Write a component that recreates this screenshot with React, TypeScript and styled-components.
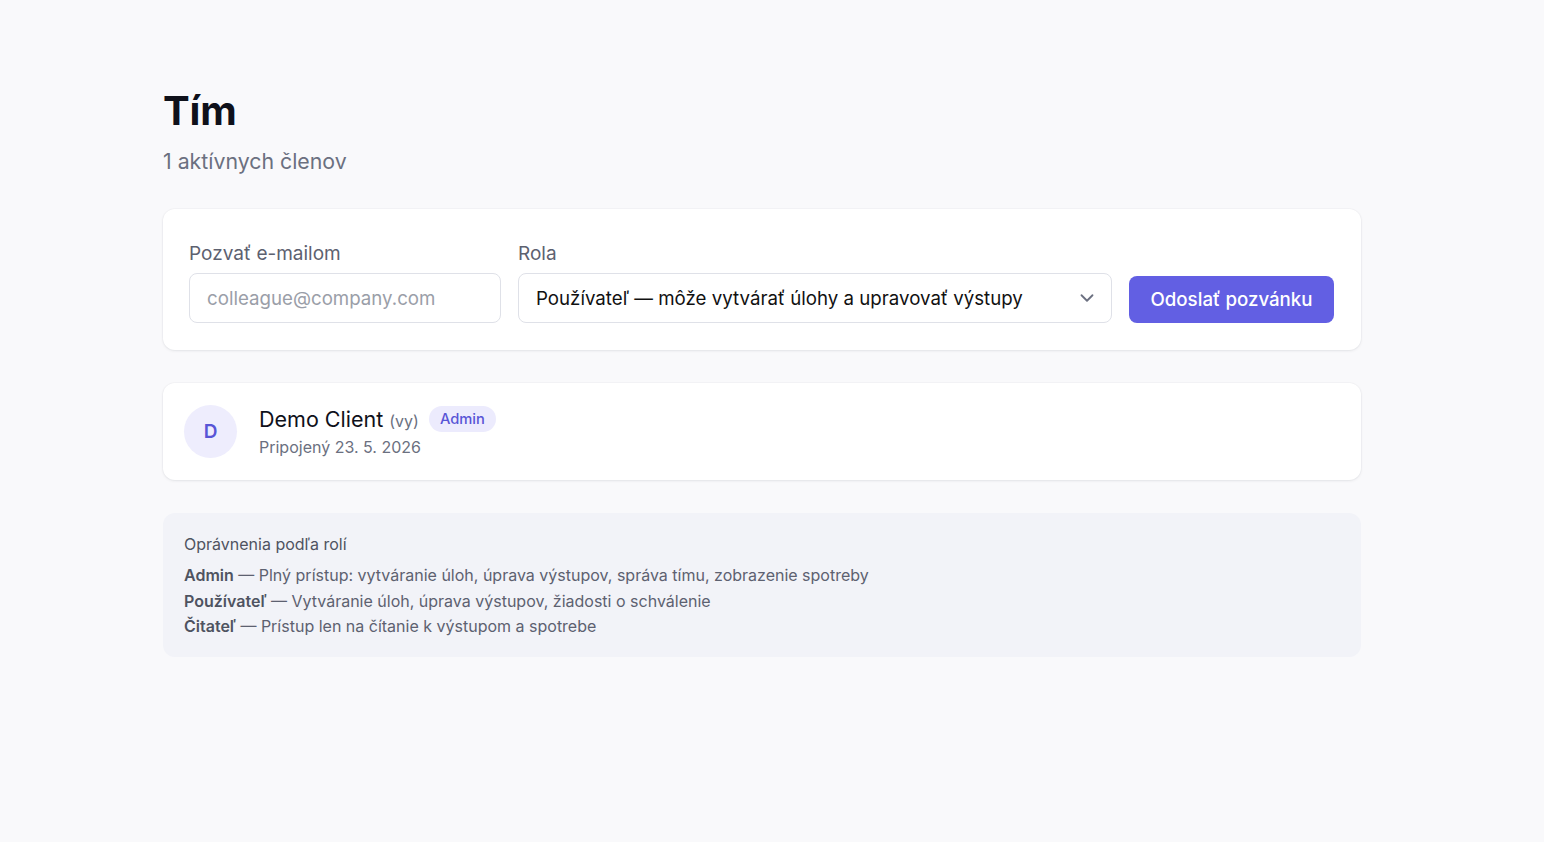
import React, { useState } from "react";
import styled, { createGlobalStyle } from "styled-components";

const GlobalStyle = createGlobalStyle`
    html, body {
        margin: 0;
        padding: 0;
        background: #f9f9fb;
        font-family: Inter, "Noto Sans", "Liberation Sans", sans-serif;
        color: #111827;
    }

    * {
        box-sizing: border-box;
    }
`;

const roles = [
    { value: "admin", label: "Admin — plný prístup k tímu a spotrebe" },
    { value: "user", label: "Používateľ — môže vytvárať úlohy a upravovať výstupy" },
    { value: "reader", label: "Čitateľ — prístup len na čítanie" },
];

const permissions = [
    { role: "Admin", text: "Plný prístup: vytváranie úloh, úprava výstupov, správa tímu, zobrazenie spotreby" },
    { role: "Používateľ", text: "Vytváranie úloh, úprava výstupov, žiadosti o schválenie" },
    { role: "Čitateľ", text: "Prístup len na čítanie k výstupom a spotrebe" },
];

const ChevronDown = () => (
    <svg width="22" height="22" viewBox="0 0 24 24" fill="none" stroke="#6b7080" strokeWidth="2" strokeLinecap="round" strokeLinejoin="round">
        <path d="m6 9 6 6 6-6" />
    </svg>
);

const App = () => {
    const [email, setEmail] = useState("");
    const [role, setRole] = useState("user");

    return (
        <>
            <GlobalStyle />
            <Page>
                <Header>
                    <Title>Tím</Title>
                    <Subtitle>1 aktívnych členov</Subtitle>
                </Header>

                <InviteCard>
                    <Field width="312px">
                        <Label>Pozvať e-mailom</Label>
                        <Input
                            type="email"
                            placeholder="colleague@company.com"
                            value={email}
                            onChange={(e) => setEmail(e.target.value)}
                        />
                    </Field>
                    <Field grow>
                        <Label>Rola</Label>
                        <SelectWrap>
                            <Select value={role} onChange={(e) => setRole(e.target.value)}>
                                {roles.map((r) => (
                                    <option key={r.value} value={r.value}>
                                        {r.label}
                                    </option>
                                ))}
                            </Select>
                            <SelectIcon>
                                <ChevronDown />
                            </SelectIcon>
                        </SelectWrap>
                    </Field>
                    <SendButton type="button">Odoslať pozvánku</SendButton>
                </InviteCard>

                <MemberCard>
                    <Avatar>D</Avatar>
                    <MemberInfo>
                        <NameRow>
                            <Name>Demo Client</Name>
                            <You>(vy)</You>
                            <Badge>Admin</Badge>
                        </NameRow>
                        <Joined>Pripojený 23. 5. 2026</Joined>
                    </MemberInfo>
                </MemberCard>

                <PermissionsBox>
                    <PermissionsTitle>Oprávnenia podľa rolí</PermissionsTitle>
                    <PermissionList>
                        {permissions.map((p) => (
                            <PermissionRow key={p.role}>
                                <strong>{p.role}</strong> — {p.text}
                            </PermissionRow>
                        ))}
                    </PermissionList>
                </PermissionsBox>
            </Page>
        </>
    );
};

export default App;

const Page = styled.main`
    display: flex;
    flex-direction: column;
    width: 1198px;
    margin-left: 163px;
    padding: 87px 0 80px;
`;

const Header = styled.header`
    display: flex;
    flex-direction: column;
    gap: 11px;
    margin-bottom: 33px;
`;

const Title = styled.h1`
    margin: 0;
    font-size: 40px;
    line-height: 48px;
    font-weight: 700;
    color: #0f111a;
    letter-spacing: -0.2px;
`;

const Subtitle = styled.p`
    margin: 0;
    font-size: 21.3px;
    line-height: 30px;
    color: #6b7080;
`;

const Card = styled.section`
    background: #ffffff;
    border-radius: 12px;
    box-shadow: 0 1px 3px rgba(17, 24, 39, 0.08), 0 0 0 1px rgba(17, 24, 39, 0.02);
`;

const InviteCard = styled(Card)`
    display: flex;
    align-items: flex-end;
    gap: 17px;
    padding: 31px 27px 27px 26px;
    margin-bottom: 33px;
`;

const Field = styled.div<{ width?: string; grow?: boolean }>`
    display: flex;
    flex-direction: column;
    gap: 6px;
    width: ${(p) => p.width || "auto"};
    flex: ${(p) => (p.grow ? "1" : "none")};
`;

const Label = styled.label`
    font-size: 19px;
    line-height: 27px;
    color: #5d6170;
`;

const Input = styled.input`
    height: 50px;
    width: 100%;
    padding: 0 17px;
    border: 1px solid #dfe1e8;
    border-radius: 8px;
    background: #fff;
    font-family: inherit;
    font-size: 18.7px;
    color: #111827;
    outline: none;

    &::placeholder {
        color: #9a9ea8;
    }
`;

const SelectWrap = styled.div`
    position: relative;
`;

const Select = styled.select`
    appearance: none;
    height: 50px;
    width: 100%;
    padding: 0 44px 0 17px;
    border: 1px solid #dfe1e8;
    border-radius: 8px;
    background: #fff;
    font-family: inherit;
    font-size: 18.7px;
    color: #111111;
    outline: none;
`;

const SelectIcon = styled.span`
    position: absolute;
    right: 14px;
    top: 50%;
    transform: translateY(-50%);
    display: flex;
    pointer-events: none;
`;

const SendButton = styled.button`
    height: 47px;
    width: 205px;
    border: none;
    border-radius: 8px;
    background: #625fe3;
    color: #ffffff;
    font-family: inherit;
    font-size: 18.7px;
    font-weight: 500;
    cursor: pointer;
`;

const MemberCard = styled(Card)`
    display: flex;
    align-items: center;
    gap: 22px;
    padding: 22px 21px;
    margin-bottom: 33px;
`;

const Avatar = styled.div`
    display: flex;
    align-items: center;
    justify-content: center;
    width: 53px;
    height: 53px;
    border-radius: 50%;
    background: #eeedfd;
    color: #5855d6;
    font-size: 19px;
    font-weight: 600;
`;

const MemberInfo = styled.div`
    display: flex;
    flex-direction: column;
    gap: 3px;
`;

const NameRow = styled.div`
    display: flex;
    align-items: center;
    gap: 6px;
    height: 28px;
`;

const Name = styled.span`
    font-size: 21.5px;
    line-height: 28px;
    color: #0f111a;
`;

const You = styled.span`
    font-size: 16px;
    color: #6b7080;
    margin-top: 3px;
`;

const Badge = styled.span`
    margin-left: 4px;
    padding: 3px 11px;
    border-radius: 999px;
    background: #ecebfd;
    color: #5855d6;
    font-size: 14.7px;
    font-weight: 500;
    line-height: 20px;
`;

const Joined = styled.span`
    font-size: 16px;
    line-height: 22px;
    color: #6b7080;
`;

const PermissionsBox = styled.section`
    display: flex;
    flex-direction: column;
    gap: 8px;
    padding: 20px 21px 17px;
    border-radius: 12px;
    background: #f2f3f8;
`;

const PermissionsTitle = styled.h3`
    margin: 0;
    font-size: 16px;
    line-height: 22px;
    font-weight: 400;
    color: #4f5361;
`;

const PermissionList = styled.div`
    display: flex;
    flex-direction: column;
`;

const PermissionRow = styled.p`
    margin: 0;
    font-size: 16px;
    line-height: 25.5px;
    color: #5d6170;

    strong {
        font-weight: 600;
        color: #4f5361;
    }
`;
